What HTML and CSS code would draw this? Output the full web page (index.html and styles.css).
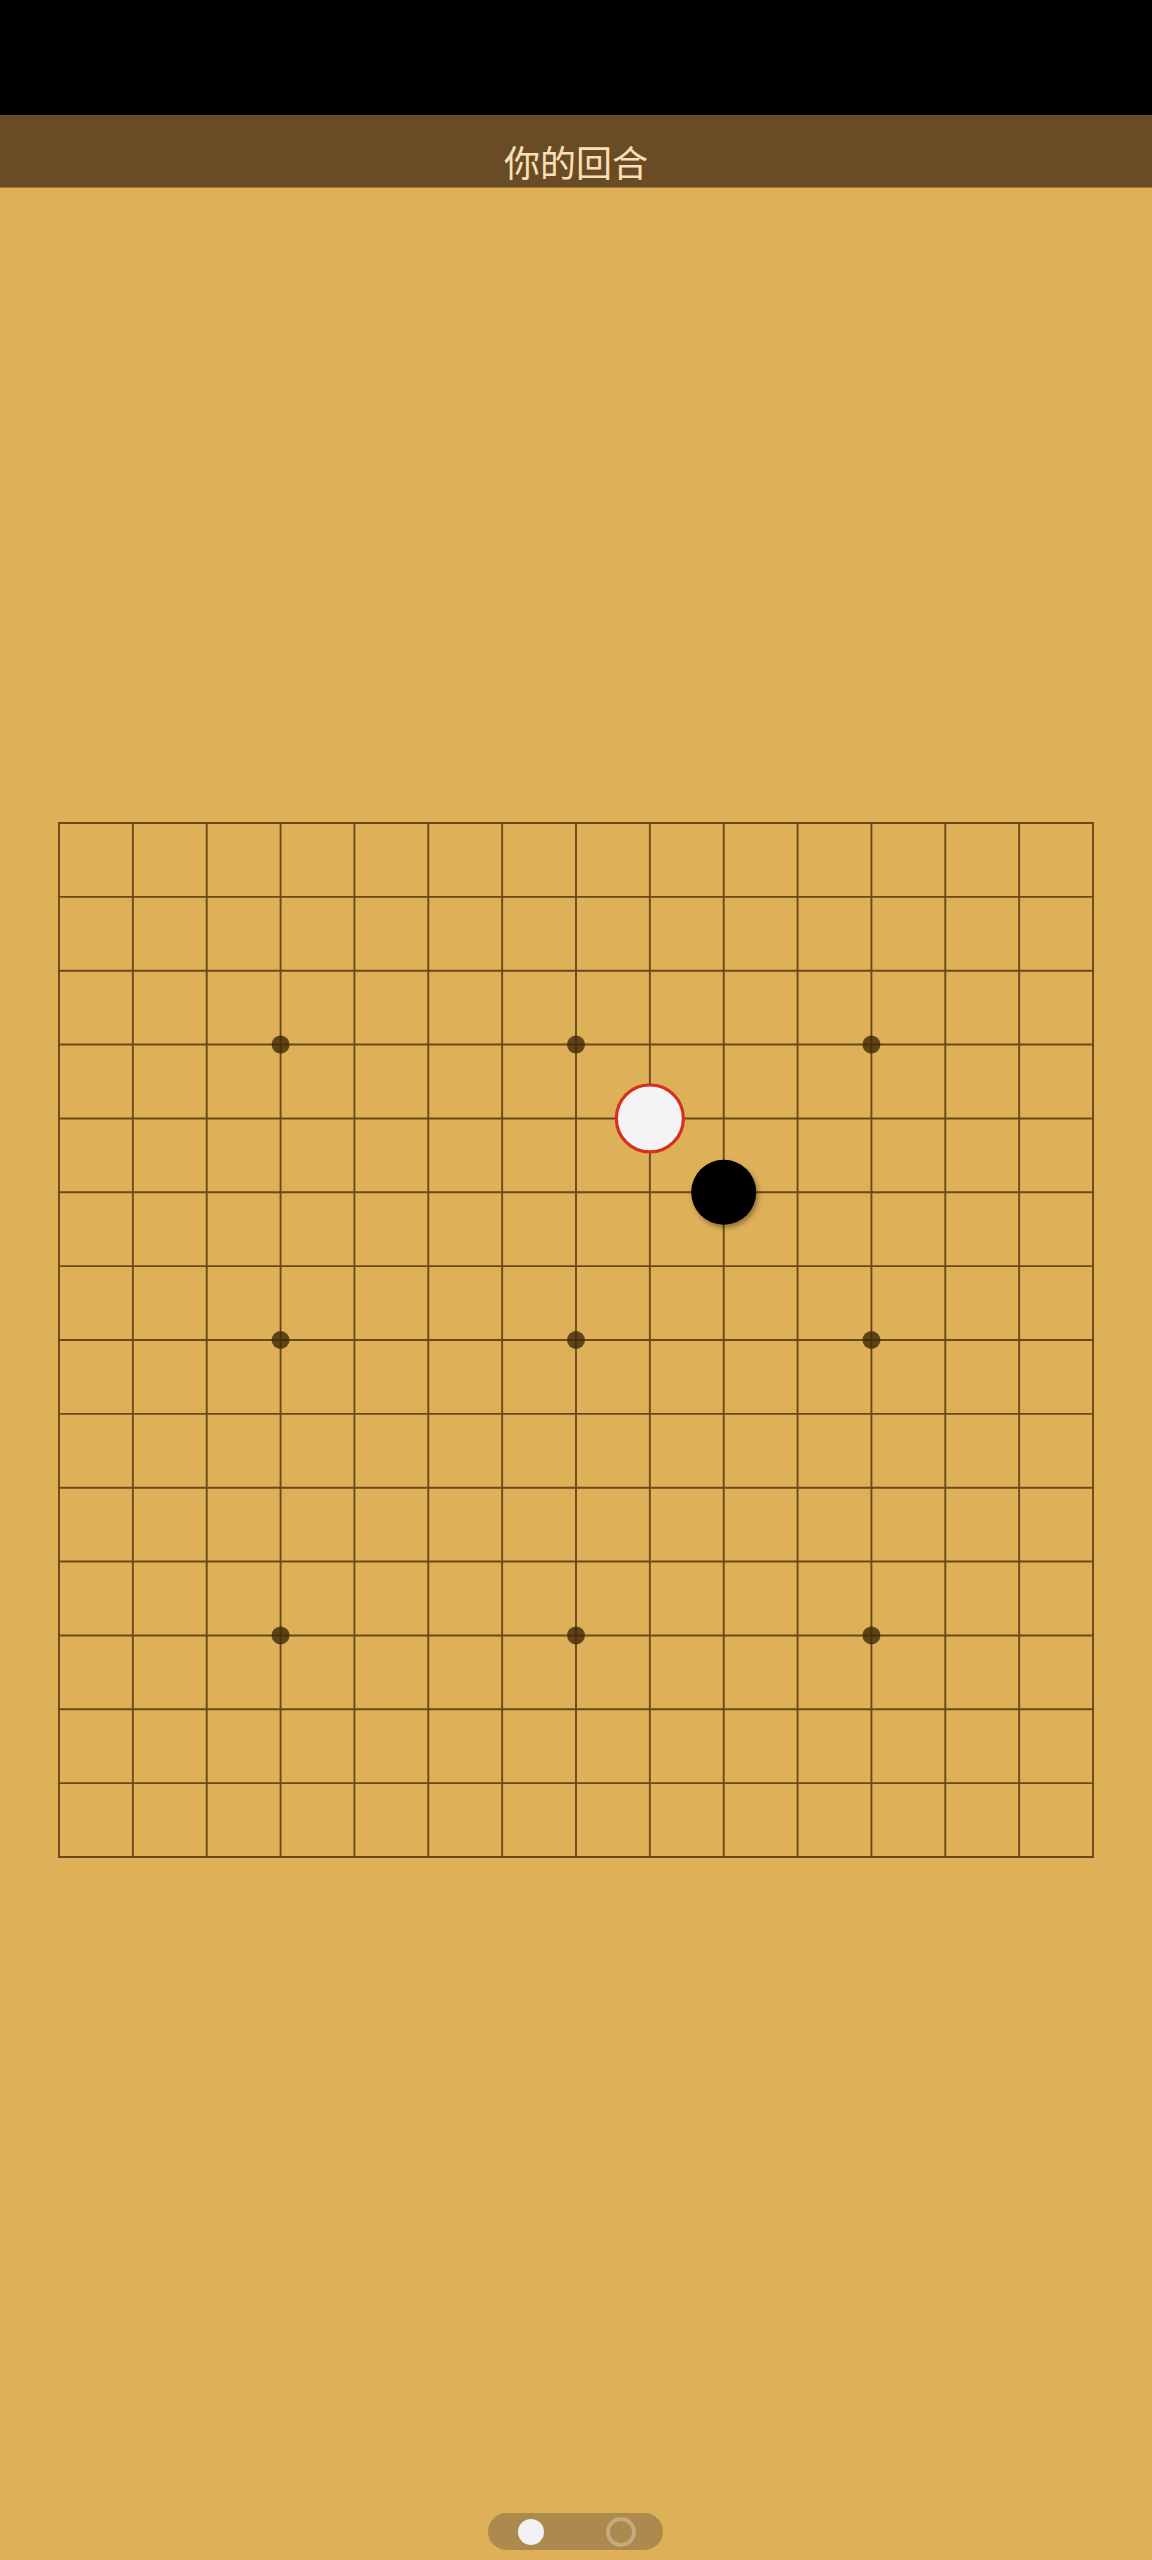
FILE: index.html
```html
<!DOCTYPE html>
<html lang="zh">
<head>
<meta charset="utf-8">
<title>你的回合</title>
<link rel="stylesheet" href="styles.css">
</head>
<body>
<div class="page">
  <div class="statusbar"></div>
  <header class="header"><span class="title">你的回合</span></header>
  <main class="main">
    <svg class="board" width="1034" height="1034" viewBox="0 0 1034 1034">
      <defs>
        <filter id="shadow" x="-30%" y="-30%" width="160%" height="160%">
          <feDropShadow dx="2" dy="3" stdDeviation="2.5" flood-color="#000" flood-opacity="0.35"/>
        </filter>
      </defs>
      <g id="grid" stroke="#6a4a1a" stroke-width="1.9"></g>
      <g fill="#3f2808" fill-opacity="0.8">
        <circle cx="221.57" cy="221.57" r="9"/>
        <circle cx="517" cy="221.57" r="9"/>
        <circle cx="812.43" cy="221.57" r="9"/>
        <circle cx="221.57" cy="517" r="9"/>
        <circle cx="517" cy="517" r="9"/>
        <circle cx="812.43" cy="517" r="9"/>
        <circle cx="221.57" cy="812.43" r="9"/>
        <circle cx="517" cy="812.43" r="9"/>
        <circle cx="812.43" cy="812.43" r="9"/>
      </g>
      <circle cx="590.86" cy="295.43" r="33.5" fill="#f4f4f6" stroke="#d8301f" stroke-width="3.2"/>
      <circle cx="664.71" cy="369.29" r="32.5" fill="#000" filter="url(#shadow)"/>
    </svg>
  </main>
  <footer class="footer">
    <div class="toggle">
      <span class="dot"></span>
      <span class="ring"></span>
    </div>
  </footer>
</div>
<script>
(function(){
  var g=document.getElementById('grid'),ns='http://www.w3.org/2000/svg',s=1034/14;
  for(var i=0;i<15;i++){
    var p=i*s;
    var h=document.createElementNS(ns,'line');
    h.setAttribute('x1',-0.95);h.setAttribute('x2',1034.95);h.setAttribute('y1',p);h.setAttribute('y2',p);
    g.appendChild(h);
    var v=document.createElementNS(ns,'line');
    v.setAttribute('y1',-0.95);v.setAttribute('y2',1034.95);v.setAttribute('x1',p);v.setAttribute('x2',p);
    g.appendChild(v);
  }
})();
</script>
</body>
</html>
```
FILE: styles.css
```css
html, body {
  margin: 0;
  padding: 0;
  background: #deb058;
}
.page {
  width: 1152px;
  height: 2560px;
  display: flex;
  flex-direction: column;
  overflow: hidden;
}
.statusbar {
  height: 115px;
  background: #000;
  flex: none;
}
.header {
  height: 73px;
  box-sizing: border-box;
  background: #694c26;
  border-bottom: 1px solid #a37b34;
  display: flex;
  justify-content: center;
  align-items: center;
  padding-top: 20px;
  flex: none;
}
.title {
  font-family: "Noto Sans CJK SC", "Noto Sans", sans-serif;
  font-size: 36px;
  line-height: 1;
  color: #fce0b5;
}
.main {
  flex: 1;
  padding-top: 635px;
  padding-left: 59px;
}
.board {
  display: block;
  overflow: visible;
}
.footer {
  flex: none;
  display: flex;
  justify-content: center;
  padding-bottom: 10px;
}
.toggle {
  width: 175px;
  height: 37px;
  box-sizing: border-box;
  border-radius: 19px;
  background: #ac894c;
  display: flex;
  align-items: center;
  justify-content: space-between;
  padding: 0 27px 0 30px;
  margin-left: -1px;
}
.dot {
  width: 26px;
  height: 26px;
  border-radius: 50%;
  background: #f1f1f4;
}
.ring {
  width: 30px;
  height: 30px;
  box-sizing: border-box;
  border-radius: 50%;
  border: 4px solid #c4aa7c;
}
```
